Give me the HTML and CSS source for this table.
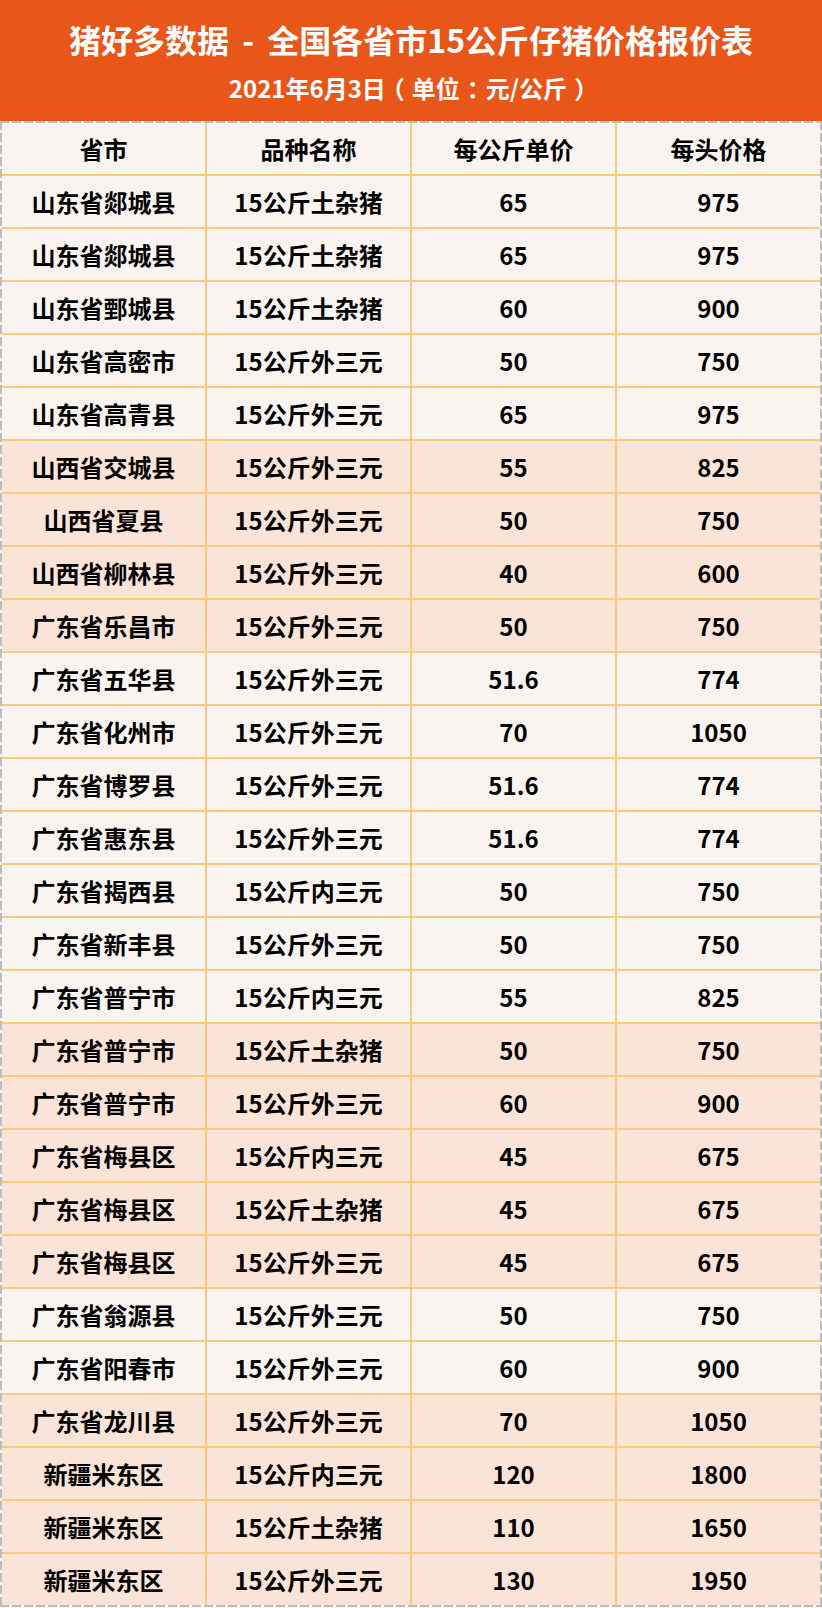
FILE: index.html
```html
<!DOCTYPE html>
<html lang="zh">
<head>
<meta charset="utf-8">
<title>猪好多数据</title>
<link rel="stylesheet" href="styles.css">
</head>
<body>
<div class="page">
  <header class="banner">
    <h1 class="title">猪好多数据 - 全国各省市15公斤仔猪价格报价表</h1>
    <p class="subtitle">2021年6月3日<span class="punct">（</span>单位<span class="punct">：</span>元/公斤<span class="punct">）</span></p>
  </header>
  <div class="table-wrap">
    <div class="table">
      <div class="cell head">省市</div><div class="cell head">品种名称</div><div class="cell head">每公斤单价</div><div class="cell head">每头价格</div>
      <div class="cell">山东省郯城县</div><div class="cell">15公斤土杂猪</div><div class="cell">65</div><div class="cell">975</div>
      <div class="cell">山东省郯城县</div><div class="cell">15公斤土杂猪</div><div class="cell">65</div><div class="cell">975</div>
      <div class="cell">山东省鄄城县</div><div class="cell">15公斤土杂猪</div><div class="cell">60</div><div class="cell">900</div>
      <div class="cell">山东省高密市</div><div class="cell">15公斤外三元</div><div class="cell">50</div><div class="cell">750</div>
      <div class="cell">山东省高青县</div><div class="cell">15公斤外三元</div><div class="cell">65</div><div class="cell">975</div>
      <div class="cell pink">山西省交城县</div><div class="cell pink">15公斤外三元</div><div class="cell pink">55</div><div class="cell pink">825</div>
      <div class="cell pink">山西省夏县</div><div class="cell pink">15公斤外三元</div><div class="cell pink">50</div><div class="cell pink">750</div>
      <div class="cell pink">山西省柳林县</div><div class="cell pink">15公斤外三元</div><div class="cell pink">40</div><div class="cell pink">600</div>
      <div class="cell pink">广东省乐昌市</div><div class="cell pink">15公斤外三元</div><div class="cell pink">50</div><div class="cell pink">750</div>
      <div class="cell">广东省五华县</div><div class="cell">15公斤外三元</div><div class="cell">51.6</div><div class="cell">774</div>
      <div class="cell">广东省化州市</div><div class="cell">15公斤外三元</div><div class="cell">70</div><div class="cell">1050</div>
      <div class="cell">广东省博罗县</div><div class="cell">15公斤外三元</div><div class="cell">51.6</div><div class="cell">774</div>
      <div class="cell">广东省惠东县</div><div class="cell">15公斤外三元</div><div class="cell">51.6</div><div class="cell">774</div>
      <div class="cell">广东省揭西县</div><div class="cell">15公斤内三元</div><div class="cell">50</div><div class="cell">750</div>
      <div class="cell">广东省新丰县</div><div class="cell">15公斤外三元</div><div class="cell">50</div><div class="cell">750</div>
      <div class="cell">广东省普宁市</div><div class="cell">15公斤内三元</div><div class="cell">55</div><div class="cell">825</div>
      <div class="cell pink">广东省普宁市</div><div class="cell pink">15公斤土杂猪</div><div class="cell pink">50</div><div class="cell pink">750</div>
      <div class="cell pink">广东省普宁市</div><div class="cell pink">15公斤外三元</div><div class="cell pink">60</div><div class="cell pink">900</div>
      <div class="cell pink">广东省梅县区</div><div class="cell pink">15公斤内三元</div><div class="cell pink">45</div><div class="cell pink">675</div>
      <div class="cell pink">广东省梅县区</div><div class="cell pink">15公斤土杂猪</div><div class="cell pink">45</div><div class="cell pink">675</div>
      <div class="cell pink">广东省梅县区</div><div class="cell pink">15公斤外三元</div><div class="cell pink">45</div><div class="cell pink">675</div>
      <div class="cell">广东省翁源县</div><div class="cell">15公斤外三元</div><div class="cell">50</div><div class="cell">750</div>
      <div class="cell">广东省阳春市</div><div class="cell">15公斤外三元</div><div class="cell">60</div><div class="cell">900</div>
      <div class="cell pink">广东省龙川县</div><div class="cell pink">15公斤外三元</div><div class="cell pink">70</div><div class="cell pink">1050</div>
      <div class="cell pink">新疆米东区</div><div class="cell pink">15公斤内三元</div><div class="cell pink">120</div><div class="cell pink">1800</div>
      <div class="cell pink">新疆米东区</div><div class="cell pink">15公斤土杂猪</div><div class="cell pink">110</div><div class="cell pink">1650</div>
      <div class="cell pink">新疆米东区</div><div class="cell pink">15公斤外三元</div><div class="cell pink">130</div><div class="cell pink">1950</div>
    </div>
  </div>
</div>
</body>
</html>
```

FILE: styles.css
```css
html, body {
  margin: 0;
  padding: 0;
  background: #f9f4f0;
}

.page {
  width: 822px;
  font-family: "Noto Sans CJK SC", "Noto Sans", sans-serif;
  font-weight: 700;
}

.banner {
  background: #e9561a;
  height: 121px;
  color: #ffffff;
  display: flex;
  flex-direction: column;
  align-items: center;
  box-sizing: border-box;
  padding-top: 15px;
}

.title {
  margin: 0;
  font-size: 32px;
  line-height: 48px;
  font-weight: 700;
  word-spacing: 6px;
}

.subtitle {
  margin: 0;
  margin-top: 7px;
  font-size: 24px;
  line-height: 36px;
  font-weight: 700;
}

.punct {
  font-feature-settings: "halt" 1;
  padding: 0 7px;
}

.table-wrap {
  padding: 2px;
  background-color: #f9f4f0;
  background-image:
    repeating-linear-gradient(90deg, #bdbdbd 0 9px, transparent 9px 12px),
    repeating-linear-gradient(90deg, #bdbdbd 0 9px, transparent 9px 12px),
    repeating-linear-gradient(180deg, #bdbdbd 0 9px, transparent 9px 12px),
    repeating-linear-gradient(180deg, #bdbdbd 0 9px, transparent 9px 12px);
  background-size: 100% 2px, 100% 2px, 2px 100%, 2px 100%;
  background-position: 0 0, 0 100%, 0 0, 100% 0;
  background-repeat: no-repeat;
}

.table {
  display: grid;
  grid-template-columns: repeat(4, 1fr);
  grid-auto-rows: 51px;
  gap: 2px;
  background: #fcc97d;
}

.cell {
  background: #f9f4f0;
  color: #000000;
  font-size: 24px;
  display: flex;
  align-items: center;
  justify-content: center;
  line-height: 1;
}

.cell.pink {
  background: #fae4d8;
}
```
